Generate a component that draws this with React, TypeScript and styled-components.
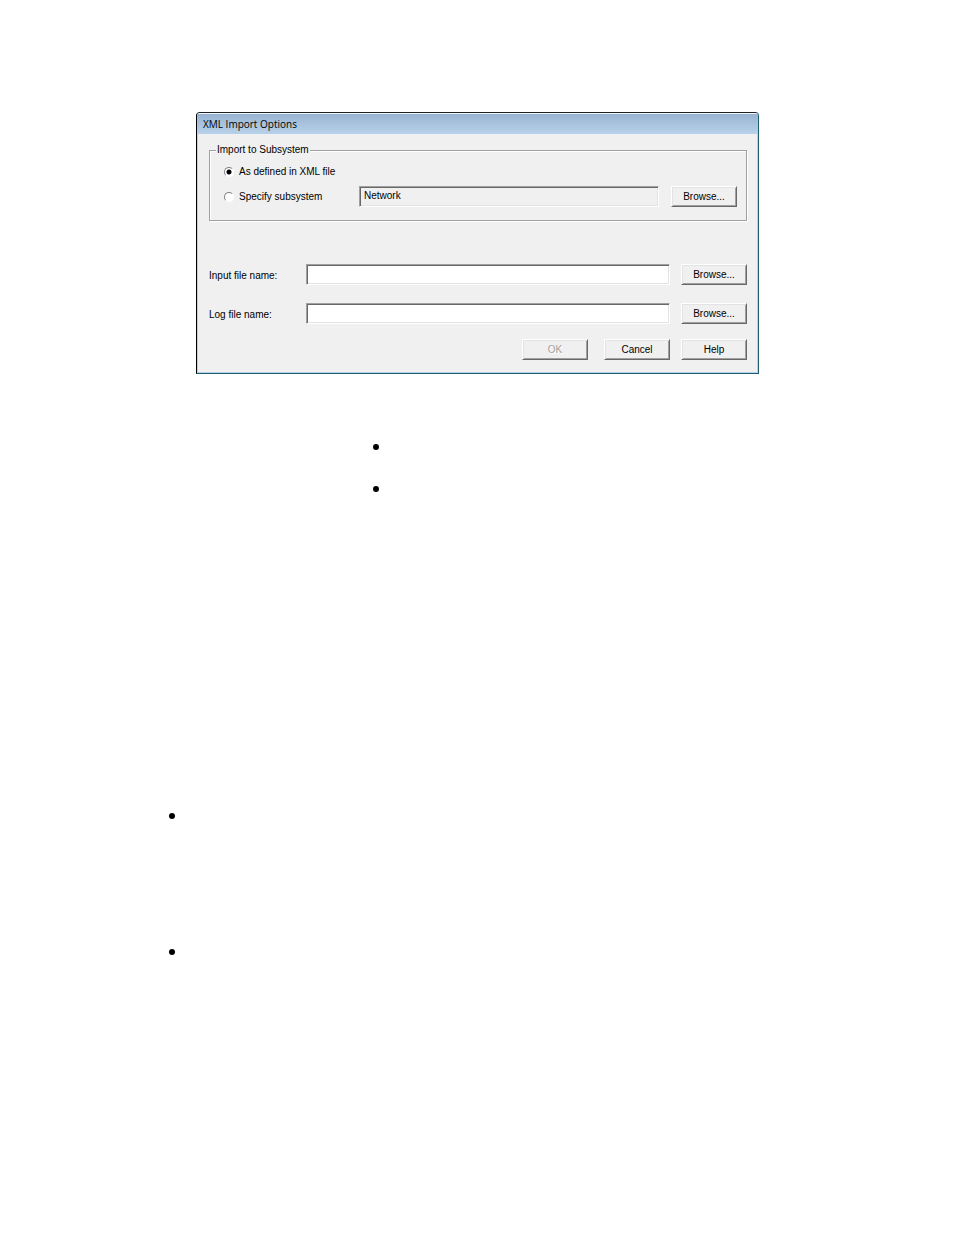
import { useState } from 'react'
import styled, { createGlobalStyle } from 'styled-components'

const GlobalStyle = createGlobalStyle`
  * {
    box-sizing: border-box;
  }

  body {
    margin: 0;
    background: #ffffff;
    color: #000000;
    font-family: 'Liberation Sans', Arial, sans-serif;
    font-size: 10px;
    line-height: 14px;
  }
`

export const App = () => {
  const [target, setTarget] = useState('xml')
  const [subsystem, setSubsystem] = useState('Network')
  const [inputFile, setInputFile] = useState('')
  const [logFile, setLogFile] = useState('')

  return (
    <Page>
      <GlobalStyle />
      <Dialog role='dialog' aria-labelledby='dialog-title'>
        <TitleBar id='dialog-title'>XML Import Options</TitleBar>
        <Content>
          <Group>
            <Legend>Import to Subsystem</Legend>
            <RadioLabel>
              <Radio
                type='radio'
                name='target'
                checked={target === 'xml'}
                onChange={() => setTarget('xml')}
              />
              As defined in XML file
            </RadioLabel>
            <SubsystemRow>
              <RadioLabel>
                <Radio
                  type='radio'
                  name='target'
                  checked={target === 'specify'}
                  onChange={() => setTarget('specify')}
                />
                Specify subsystem
              </RadioLabel>
              <TextField
                aria-label='Subsystem'
                value={subsystem}
                readOnly={target === 'xml'}
                onChange={(e) => setSubsystem(e.target.value)}
              />
              <Button type='button'>Browse...</Button>
            </SubsystemRow>
          </Group>

          <FileRow>
            <FieldLabel htmlFor='input-file'>Input file name:</FieldLabel>
            <TextField
              id='input-file'
              value={inputFile}
              onChange={(e) => setInputFile(e.target.value)}
            />
            <Button type='button'>Browse...</Button>
          </FileRow>
          <FileRow>
            <FieldLabel htmlFor='log-file'>Log file name:</FieldLabel>
            <TextField
              id='log-file'
              value={logFile}
              onChange={(e) => setLogFile(e.target.value)}
            />
            <Button type='button'>Browse...</Button>
          </FileRow>

          <Actions>
            <Button type='button' disabled={!inputFile}>OK</Button>
            <ActionPair>
              <Button type='button'>Cancel</Button>
              <Button type='button'>Help</Button>
            </ActionPair>
          </Actions>
        </Content>
      </Dialog>

      <BulletList $indent={373} $top={70} $gap={36}>
        <li />
        <li />
      </BulletList>
      <BulletList $indent={169} $top={321} $gap={130}>
        <li />
        <li />
      </BulletList>
    </Page>
  )
}

export default App

const Page = styled.main`
  padding: 112px 0 60px;
`

const Dialog = styled.section`
  margin: 0 195px 0 196px;
  border: 1px solid #1d5f6f;
  border-top-color: #1c2228;
  border-left-color: #000000;
  border-radius: 4px 4px 0 0;
  background: #f0f0f0;
  box-shadow: inset 0 0 0 1px #b9d1ea;
  overflow: hidden;
`

const TitleBar = styled.h1`
  margin: 0;
  height: 21px;
  padding-left: 6px;
  border-top: 1px solid #eef4fa;
  background: linear-gradient(#98b4d2, #b9d1ea);
  font-family: 'Open Sans', 'Noto Sans', sans-serif;
  font-size: 10px;
  font-weight: 400;
  line-height: 21px;
`

const Content = styled.form`
  padding: 9px 11px 13px 12px;
`

const Group = styled.fieldset`
  margin: 0 0 43px;
  padding: 8px 9px 13px 14px;
  border: 1px solid #a0a0a0;
  box-shadow: 1px 1px 0 #ffffff, inset 1px 1px 0 #ffffff;
`

const Legend = styled.legend`
  margin-left: -8px;
  padding: 0 1px;
  background: #f0f0f0;
`

const RadioLabel = styled.label`
  display: flex;
  align-items: center;
  gap: 5px;
`

const Radio = styled.input`
  appearance: none;
  width: 10px;
  height: 10px;
  margin: 0;
  border: 1px solid;
  border-color: #808080 #ffffff #ffffff #808080;
  border-radius: 50%;
  background: #ffffff;

  &:checked {
    background: radial-gradient(circle, #000000 2px, #ffffff 3px);
  }
`

const SubsystemRow = styled.div`
  display: grid;
  grid-template-columns: 135px 1fr 66px;
  align-items: center;
  margin-top: 7px;

  input:not([type='radio']) {
    margin-right: 12px;
  }
`

const TextField = styled.input`
  min-width: 0;
  height: 21px;
  padding: 0 4px 3px;
  border: 1px solid;
  border-color: #a0a0a0 #ffffff #ffffff #a0a0a0;
  background: #ffffff;
  box-shadow: inset 1px 1px 0 #696969, inset -1px -1px 0 #e3e3e3;
  font: inherit;

  &:read-only {
    background: #f0f0f0;
  }
`

const Button = styled.button`
  width: 66px;
  height: 21px;
  padding: 0;
  border: 1px solid;
  border-color: #ffffff #696969 #696969 #ffffff;
  background: #f0f0f0;
  box-shadow: inset 1px 1px 0 #e3e3e3, inset -1px -1px 0 #a0a0a0;
  color: #000000;
  font: inherit;

  &:disabled {
    color: #a0a0a0;
    text-shadow: 1px 1px 0 #ffffff;
  }
`

const FileRow = styled.div`
  display: grid;
  grid-template-columns: 97px 1fr 66px;
  align-items: center;
  margin-bottom: 18px;

  input {
    margin-right: 11px;
  }
`

const FieldLabel = styled.label`
  padding-top: 3px;
`

const Actions = styled.div`
  display: flex;
  justify-content: flex-end;
  gap: 16px;
  margin-top: -3px;
`

const ActionPair = styled.div`
  display: flex;
  gap: 11px;
`

const BulletList = styled.ul<{ $indent: number; $top: number; $gap: number }>`
  display: grid;
  gap: ${(p) => p.$gap}px;
  margin: ${(p) => p.$top}px 0 0;
  padding-left: ${(p) => p.$indent}px;
  list-style: none;

  li::before {
    content: '';
    display: block;
    width: 6px;
    height: 6px;
    border-radius: 50%;
    background: #000000;
  }
`
